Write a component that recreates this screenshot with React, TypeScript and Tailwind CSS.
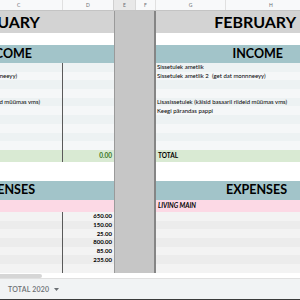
import React from "react";

// [text, right edge of the visible tail]
const incomeLeft: [string, number][] = [
  ["", 40],
  ["neeyy)", 17],
  ["", 40],
  ["", 40],
  ["d müümas vms)", 40],
  ["", 40],
  ["", 40],
  ["", 40],
  ["", 40],
  ["", 40],
];
const incomeRight = [
  "Sissetulek ametlik",
  "Sissetulek ametlik 2  (get dat monnneeyy)",
  "",
  "",
  "Lisasissetulek (käisid basaaril riideid müümas vms)",
  "Keegi pärandas pappi",
  "",
  "",
  "",
  "",
];
const expenseNums = ["650.00", "150.00", "25.00", "800.00", "85.00", "235.00", ""];

function IncomeRow({ i, children }: { i: number; children?: React.ReactNode }) {
  return (
    <div
      className={`h-[8.7px] flex items-center whitespace-pre text-[6px] leading-none text-black ${
        i % 2 === 0 ? "bg-[#edf2f3]" : "bg-[#f5f7f8]"
      }`}
    >
      {children}
    </div>
  );
}

function ExpenseRow({ i, children }: { i: number; children?: React.ReactNode }) {
  return (
    <div
      className={`h-[8.7px] flex items-center whitespace-pre text-[6px] leading-none text-black ${
        i % 2 === 0 ? "bg-[#f3f3f3]" : "bg-[#ececec]"
      }`}
    >
      {children}
    </div>
  );
}

function LeftBlock() {
  return (
    <div className="w-[114px] flex flex-col">
      <div className="h-[22px] bg-[#d3d3d3] flex items-center">
        <div className="w-[40px] flex justify-end whitespace-nowrap text-[16px] font-bold leading-none">JANUARY</div>
      </div>
      <div className="h-[12px] bg-white" />
      <div className="h-[18px] bg-[#a2c4c9] flex items-center">
        <div className="w-[32px] flex justify-end whitespace-nowrap text-[12.5px] font-bold leading-none">INCOME</div>
      </div>
      <div className="flex">
        <div className="w-[63px] border-r border-[#5a5a5a]">
          {incomeLeft.map(([t, end], i) => (
            <IncomeRow key={i} i={i}>
              <div className={`flex justify-end ${end === 17 ? "w-[17px]" : "w-[40px]"}`}>{t}</div>
            </IncomeRow>
          ))}
          <div className="h-[12px] bg-[#d9ead3]" />
        </div>
        <div className="flex-1">
          {incomeLeft.map((_, i) => (
            <IncomeRow key={i} i={i} />
          ))}
          <div className="h-[12px] bg-[#d9ead3] flex items-center justify-end pr-[2px] text-[6.5px] font-bold text-[#38761d]">
            0.00
          </div>
        </div>
      </div>
      <div className="h-[19px] bg-white" />
      <div className="h-[19px] bg-[#a2c4c9] flex items-center">
        <div className="w-[35px] flex justify-end whitespace-nowrap text-[12.5px] font-bold leading-none">EXPENSES</div>
      </div>
      <div className="h-[12px] bg-[#fcd9e5]" />
      <div className="flex">
        <div className="w-[63px] border-r border-[#5a5a5a]">
          {expenseNums.map((_, i) => (
            <ExpenseRow key={i} i={i} />
          ))}
        </div>
        <div className="flex-1">
          {expenseNums.map((n, i) => (
            <ExpenseRow key={i} i={i}>
              <div className="w-full text-right pr-[2px] font-bold">{n}</div>
            </ExpenseRow>
          ))}
        </div>
      </div>
    </div>
  );
}

function RightBlock() {
  return (
    <div className="flex-1 flex flex-col">
      <div className="h-[22px] bg-[#d3d3d3] flex items-center justify-end pr-[4px]">
        <span className="text-[16px] font-bold leading-none">FEBRUARY</span>
      </div>
      <div className="h-[12px] bg-white" />
      <div className="h-[18px] bg-[#a2c4c9] flex items-center justify-end pr-[17px]">
        <span className="text-[12.5px] font-bold leading-none">INCOME</span>
      </div>
      {incomeRight.map((t, i) => (
        <IncomeRow key={i} i={i}>
          <span className="pl-[1px]">{t}</span>
        </IncomeRow>
      ))}
      <div className="h-[12px] bg-[#d9ead3] flex items-center pl-[2px] text-[6.5px] font-bold">TOTAL</div>
      <div className="h-[19px] bg-white" />
      <div className="h-[19px] bg-[#a2c4c9] flex items-center justify-end pr-[13px]">
        <span className="text-[12.5px] font-bold leading-none">EXPENSES</span>
      </div>
      <div className="h-[12px] bg-[#fcd9e5] flex items-center pl-[2px] text-[6.5px] font-bold italic">LIVING MAIN</div>
      {expenseNums.map((_, i) => (
        <ExpenseRow key={i} i={i} />
      ))}
    </div>
  );
}

export default function App() {
  return (
    <div className="w-[300px] h-[300px] overflow-hidden bg-white flex flex-col [font-family:Lato,'Noto_Sans',sans-serif] text-black">
      {/* column letters */}
      <div className="h-[11px] flex bg-[#f8f9fa] border-b border-[#c4c4c4] text-[5px] text-[#6b6f73] leading-none">
        <div className="w-[63px] flex items-center pl-[17px] border-r border-[#e0e0e0]">C</div>
        <div className="w-[51px] flex items-center justify-center border-r border-[#d0d0d0]">D</div>
        <div className="w-[22px] flex items-center justify-center bg-[#e8e8e8] border-r border-[#d8d8d8]">E</div>
        <div className="w-[20px] flex items-center justify-center border-r border-[#e0e0e0]">F</div>
        <div className="w-[70px] flex items-center justify-center border-r border-[#e0e0e0]">G</div>
        <div className="flex-1 flex items-center pl-[43px]">H</div>
      </div>
      <div className="h-[262px] flex">
        <LeftBlock />
        <div className="w-[42px] bg-[#c6c6c6] border-l border-[#9a9a9a] border-r-2 border-r-[#858585]" />
        <RightBlock />
      </div>
      {/* horizontal scrollbar */}
      <div className="h-[5px] bg-white flex items-start pt-[1px]">
        <div className="w-[42px] h-[4px] bg-[#d6d6d6] rounded-r-full" />
      </div>
      {/* sheet tabs */}
      <div className="flex-1 bg-[#f1f3f4] border-t border-[#e0e0e0] border-b border-b-[#3a3a3a] flex items-center">
        <div className="h-full flex items-center gap-[5px] pl-[8px] pr-[8px] text-[7px] font-semibold text-[#6b6f73] tracking-[0.2px]">
          <span>TOTAL 2020</span>
          <svg width="5" height="3" viewBox="0 0 5 3">
            <path d="M0 0 L5 0 L2.5 3 Z" fill="#6b6f73" />
          </svg>
        </div>
      </div>
    </div>
  );
}
